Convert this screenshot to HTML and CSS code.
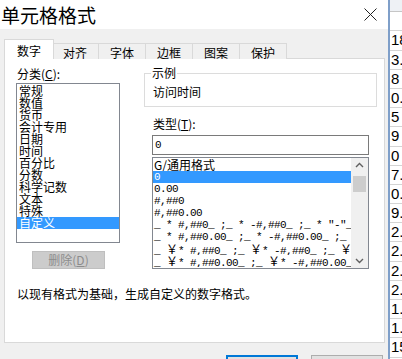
FILE: index.html
```html
<!DOCTYPE html>
<html lang="zh-CN">
<head>
    <meta charset="UTF-8">
    <meta name="viewport" content="width=device-width, initial-scale=1.0">
    <title>单元格格式</title>
    <link rel="stylesheet" href="styles.css">
</head>
<body>

<div class="dialog">
    <div class="title-bar">
        <span class="title">单元格格式</span>
        <svg class="close" width="13" height="13" viewBox="0 0 13 13">
            <path d="M0.5 0.5 L12.5 12.5 M12.5 0.5 L0.5 12.5" stroke="#222" stroke-width="1" fill="none"/>
        </svg>
    </div>

    <div class="dialog-body">
        <div class="tabs">
            <div class="tab active">数字</div>
            <div class="tab">对齐</div>
            <div class="tab">字体</div>
            <div class="tab">边框</div>
            <div class="tab">图案</div>
            <div class="tab">保护</div>
        </div>

        <div class="panel">
            <div class="panel-main">
                <div class="category">
                    <div class="label">分类(<u>C</u>):</div>
                    <ul class="cat-list">
                        <li>常规</li>
                        <li>数值</li>
                        <li>货币</li>
                        <li>会计专用</li>
                        <li>日期</li>
                        <li>时间</li>
                        <li>百分比</li>
                        <li>分数</li>
                        <li>科学记数</li>
                        <li>文本</li>
                        <li>特殊</li>
                        <li class="sel">自定义</li>
                    </ul>
                    <button class="btn-delete" disabled>删除(<u>D</u>)</button>
                </div>

                <div class="detail">
                    <fieldset class="sample">
                        <legend>示例</legend>
                        <div class="sample-text">访问时间</div>
                    </fieldset>

                    <div class="type-box">
                        <div class="label">类型(<u>T</u>):</div>
                        <div class="type-input">0</div>
                        <div class="format-list">
                            <ul>
                                <li class="cjk">G/通用格式</li>
                                <li class="sel">0</li>
                                <li>0.00</li>
                                <li>#,##0</li>
                                <li>#,##0.00</li>
                                <li>_ * #,##0_ ;_ * -#,##0_ ;_ * "-"_ ;_ @_ </li>
                                <li>_ * #,##0.00_ ;_ * -#,##0.00_ ;_ * "-"??_ ;_ @_ </li>
                                <li>_ <span class="yen">￥</span>* #,##0_ ;_ <span class="yen">￥</span>* -#,##0_ ;_ <span class="yen">￥</span>* "-"_ ;_ @_ </li>
                                <li>_ <span class="yen">￥</span>* #,##0.00_ ;_ <span class="yen">￥</span>* -#,##0.00_ ;_ <span class="yen">￥</span>* "-"??_ ;_ @_ </li>
                            </ul>
                            <div class="scrollbar">
                                <svg class="arrow" width="17" height="14" viewBox="0 0 17 14">
                                    <path d="M5 9 L8.5 5.5 L12 9" stroke="#606060" stroke-width="1.4" fill="none"/>
                                </svg>
                                <div class="track">
                                    <div class="thumb"></div>
                                </div>
                                <svg class="arrow" width="17" height="14" viewBox="0 0 17 14">
                                    <path d="M5 5 L8.5 8.5 L12 5" stroke="#606060" stroke-width="1.4" fill="none"/>
                                </svg>
                            </div>
                        </div>
                    </div>
                </div>
            </div>

            <p class="hint">以现有格式为基础，生成自定义的数字格式。</p>
        </div>

        <div class="buttons">
            <button class="btn primary">确定</button>
            <button class="btn">取消</button>
        </div>
    </div>
</div>

<div class="sheet">
    <div class="sheet-head"></div>
    <div class="sheet-blank"></div>
    <div class="cell">18</div>
    <div class="cell">3.</div>
    <div class="cell">8</div>
    <div class="cell">0.</div>
    <div class="cell">5</div>
    <div class="cell">9</div>
    <div class="cell">0</div>
    <div class="cell">7.</div>
    <div class="cell">0.</div>
    <div class="cell">9.</div>
    <div class="cell">2.</div>
    <div class="cell">2.</div>
    <div class="cell">2.</div>
    <div class="cell">2.</div>
    <div class="cell">1.</div>
    <div class="cell">1.</div>
    <div class="cell">15</div>
</div>

</body>
</html>
```

FILE: styles.css
```css
*{
    margin: 0;
    padding: 0;
    box-sizing: border-box;
}
body{
    width: 402px;
    height: 359px;
    overflow: hidden;
    display: flex;
    align-items: flex-start;
    font-family: "Noto Sans CJK SC", sans-serif;
    font-size: 12px;
    line-height: 12px;
    color: #000;
    background: #f0f0f0;
}
ul{
    list-style: none;
}
u{
    text-decoration: underline;
}

/* dialog */
.dialog{
    width: 388px;
    height: 359px;
    overflow: hidden;
    flex-shrink: 0;
    background: #f0f0f0;
}
.title-bar{
    height: 29px;
    background: #fff;
    display: flex;
    align-items: center;
    justify-content: space-between;
    padding: 0 11px 0 1px;
}
.title{
    font-size: 19px;
    line-height: 20px;
}
.close{
    display: block;
}
.dialog-body{
    padding: 10px 3px 0 4px;
}

/* tabs */
.tabs{
    display: flex;
    align-items: flex-end;
    height: 20px;
    margin-bottom: -1px;
}
.tab{
    width: 48px;
    height: 16px;
    border: 1px solid #d9d9d9;
    border-bottom: none;
    margin-left: -1px;
    background: #f0f0f0;
    text-align: center;
    line-height: 12px;
    padding-top: 3px;
}
.tab.active{
    position: relative;
    z-index: 1;
    width: 50px;
    height: 20px;
    margin-left: 0;
    margin-right: -2px;
    background: #fff;
    padding-top: 5px;
}

/* panel */
.panel{
    height: 285px;
    background: #fff;
    border: 1px solid #d9d9d9;
    padding: 9px 0 0 11px;
}
.panel-main{
    display: flex;
}
.category{
    width: 104px;
    display: flex;
    flex-direction: column;
}
.label{
    height: 12px;
    padding-left: 1px;
}
.cat-list{
    margin-top: 3px;
    height: 160px;
    border: 1px solid #828790;
    padding: 1px 0;
}
.cat-list li{
    height: 12px;
    padding-left: 2px;
}
.cat-list li.sel{
    background: #3399ff;
    color: #fff;
}
.btn-delete{
    align-self: center;
    margin-top: 8px;
    margin-left: 1px;
    width: 73px;
    height: 18px;
    background: #cccccc;
    border: 1px solid #bfbfbf;
    color: #8c8c8c;
    font-family: inherit;
    font-size: 12px;
    line-height: 12px;
}

.detail{
    width: 233px;
    margin-left: 24px;
    margin-top: -1px;
}
.sample{
    border: 1px solid #dcdcdc;
    padding: 7px 8px 8px 8px;
    min-width: 0;
}
.sample legend{
    line-height: 12px;
    padding: 0 1px;
    margin-left: -2px;
}
.sample-text{
    height: 12px;
}
.type-box{
    margin: 11px 8px 0 8px;
}
.type-input{
    margin-top: 5px;
    height: 20px;
    border: 1px solid #7a7a7a;
    padding: 4px 0 0 2px;
    font-family: "Liberation Mono", monospace;
    font-size: 11px;
    line-height: 11px;
}
.format-list{
    margin-top: 2px;
    height: 112px;
    border: 1px solid #828790;
    display: flex;
}
.format-list ul{
    flex: 1;
    min-width: 0;
    padding-top: 1px;
    overflow: hidden;
}
.format-list li{
    height: 12px;
    padding-left: 1px;
    white-space: pre;
    overflow: hidden;
    font-family: "Liberation Mono", monospace;
    font-size: 11px;
    line-height: 12px;
    letter-spacing: -0.6px;
}
.format-list li.cjk{
    font-family: "Noto Sans CJK SC", sans-serif;
    font-size: 12px;
    letter-spacing: 0;
}
.format-list li.sel{
    background: #3399ff;
    color: #fff;
}
.yen{
    font-family: "Noto Sans CJK SC", sans-serif;
    font-size: 12px;
    line-height: 12px;
    letter-spacing: 0;
}
.scrollbar{
    width: 17px;
    background: #f0f0f0;
    display: flex;
    flex-direction: column;
}
.arrow{
    display: block;
}
.track{
    flex: 1;
    padding: 4px 2px 0 2px;
}
.thumb{
    height: 16px;
    background: #cdcdcd;
}

.hint{
    margin-top: 19px;
    padding-left: 1px;
}

/* buttons */
.buttons{
    display: flex;
    justify-content: flex-end;
    gap: 13px;
    padding-right: 2px;
    margin-top: 12px;
}
.btn{
    width: 72px;
    height: 23px;
    background: #e1e1e1;
    border: 1px solid #adadad;
    font-family: inherit;
    font-size: 12px;
}
.btn.primary{
    border: 2px solid #0078d7;
}

/* worksheet behind the dialog */
.sheet{
    flex: 1;
    align-self: stretch;
    background: #fff;
    border-left: 2px solid #7f9fc9;
    font-family: "Liberation Sans", sans-serif;
    font-size: 15px;
    line-height: 16px;
    overflow: hidden;
}
.sheet-head{
    height: 12px;
    background: #eef1f5;
    border-bottom: 1px solid #c6c6c6;
}
.sheet-blank{
    height: 19.4px;
    border-bottom: 1px solid #d4d4d4;
}
.cell{
    height: 19.2px;
    border-bottom: 1px solid #d4d4d4;
    padding: 1px 0 0 1px;
    white-space: nowrap;
    overflow: hidden;
}
```
